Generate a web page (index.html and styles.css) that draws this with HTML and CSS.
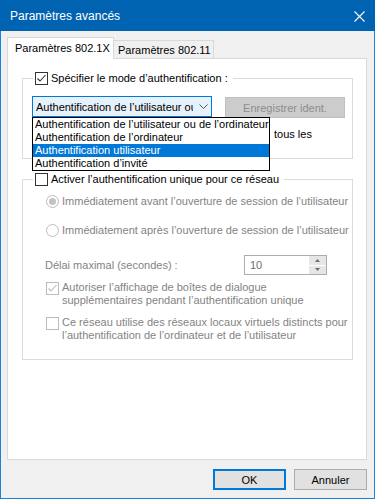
FILE: index.html
```html
<!DOCTYPE html>
<html lang="fr">
<head>
    <meta charset="UTF-8">
    <meta name="viewport" content="width=device-width, initial-scale=1.0">
    <title>Paramètres avancés</title>
    <link rel="stylesheet" href="styles.css">
</head>
<body>

    <div class="window">
        <div class="titlebar">
            <span>Paramètres avancés</span>
            <svg class="close" width="11" height="11" viewBox="0 0 11 11"><path d="M0.5 0.5L10.5 10.5M10.5 0.5L0.5 10.5" stroke="#fff" stroke-width="1.1" fill="none"/></svg>
        </div>

        <div class="client">
            <div class="tabs">
                <div class="tab active">Paramètres 802.1X</div>
                <div class="tab">Paramètres 802.11</div>
            </div>

            <div class="panel">
                <fieldset class="group group-auth">
                    <legend>
                        <span class="cb"><svg width="11" height="11" viewBox="0 0 11 11"><path d="M1.5 5.5L4 8L9.5 2" stroke="#333" stroke-width="1.1" fill="none"/></svg></span>
                        Spécifier le mode d’authentification :
                    </legend>

                    <div class="auth-row">
                        <div class="combo-wrap">
                            <div class="combo">
                                <span class="combo-text">Authentification de l’utilisateur ou</span>
                                <svg class="chevron" width="9" height="5" viewBox="0 0 9 5"><path d="M0.5 0.5L4.5 4.5L8.5 0.5" stroke="#555" stroke-width="1" fill="none"/></svg>
                            </div>
                            <ul class="dropdown">
                                <li>Authentification de l’utilisateur ou de l’ordinateur</li>
                                <li>Authentification de l’ordinateur</li>
                                <li class="selected">Authentification utilisateur</li>
                                <li>Authentification d’invité</li>
                            </ul>
                        </div>
                        <button class="btn-register" disabled>Enregistrer ident.</button>
                    </div>

                    <div class="cred-row"><span class="cred-text">tous les</span></div>
                </fieldset>

                <fieldset class="group group-sso">
                    <legend>
                        <span class="cb"></span>
                        Activer l’authentification unique pour ce réseau
                    </legend>

                    <div class="opt-row radio-first">
                        <span class="radio checked"></span>
                        <span>Immédiatement avant l’ouverture de session de l’utilisateur</span>
                    </div>
                    <div class="opt-row radio-second">
                        <span class="radio"></span>
                        <span>Immédiatement après l’ouverture de session de l’utilisateur</span>
                    </div>

                    <div class="delay-row">
                        <span>Délai maximal (secondes) :</span>
                        <div class="spin">
                            <span class="spin-value">10</span>
                            <span class="spin-btns">
                                <span><svg width="5" height="3" viewBox="0 0 5 3"><path d="M0 3L2.5 0L5 3Z" fill="#6d6d6d"/></svg></span>
                                <span><svg width="5" height="3" viewBox="0 0 5 3"><path d="M0 0L2.5 3L5 0Z" fill="#6d6d6d"/></svg></span>
                            </span>
                        </div>
                    </div>

                    <div class="opt-row check-first">
                        <span class="cb disabled"><svg width="11" height="11" viewBox="0 0 11 11"><path d="M1.5 5.5L4 8L9.5 2" stroke="#bcbcbc" stroke-width="1.1" fill="none"/></svg></span>
                        <span>Autoriser l’affichage de boîtes de dialogue<br>supplémentaires pendant l’authentification unique</span>
                    </div>
                    <div class="opt-row check-second">
                        <span class="cb disabled"></span>
                        <span>Ce réseau utilise des réseaux locaux virtuels distincts pour<br>l’authentification de l’ordinateur et de l’utilisateur</span>
                    </div>
                </fieldset>
            </div>

            <div class="buttons">
                <button class="btn btn-default">OK</button>
                <button class="btn">Annuler</button>
            </div>
        </div>
    </div>

</body>
</html>
```

FILE: styles.css
```css
* { box-sizing: border-box; }
body { margin: 0; font-family: "Liberation Sans", Arial, sans-serif; font-size: 11px; color: #000; background: #f0f0f0; }

.window { width: 375px; height: 499px; border: 1px solid #1883d7; border-top: none; background: #f0f0f0; }
.titlebar { height: 31px; margin: 0 -1px; padding: 0 10px; background: #0063b1; color: #fff; font-size: 12px; display: flex; align-items: center; justify-content: space-between; }
.close { margin-top: 1px; }

.client { padding: 6px 7px 0 6px; }
.tabs { display: flex; align-items: flex-end; }
.tab { width: 100px; height: 18px; padding-left: 4px; border: 1px solid #d9d9d9; border-left: none; border-bottom: none; background: #f0f0f0; line-height: 18px; white-space: nowrap; }
.tab.active { width: 107px; height: 22px; padding-left: 7px; margin-bottom: -1px; border-left: 1px solid #d9d9d9; background: #fff; line-height: 20px; position: relative; z-index: 1; }

.panel { height: 402px; padding: 0 13px 0 14px; border: 1px solid #d9d9d9; background: #fff; }

.group { margin: 13px 0 0; padding: 0 0 4px; min-width: 0; border: 1px solid #dcdcdc; }
.group-sso { margin-top: 14px; padding-bottom: 17px; color: #838383; }
.group legend { margin-left: 10px; padding: 0 5px 0 2px; height: 13px; line-height: 13px; display: flex; align-items: center; gap: 3px; color: #000; }

.cb { width: 13px; height: 13px; flex: none; border: 1px solid #333; background: #fff; display: flex; align-items: center; justify-content: center; }
.cb.disabled { border-color: #bcbcbc; }
.radio { width: 13px; height: 13px; flex: none; border: 1px solid #bcbcbc; border-radius: 50%; background: #fff; display: flex; align-items: center; justify-content: center; }
.radio.checked::after { content: ""; width: 7px; height: 7px; border-radius: 50%; background: #c2c2c2; }

.auth-row { display: flex; align-items: flex-start; gap: 13px; margin: 11px 0 0 9px; }
.combo-wrap { position: relative; }
.combo { width: 180px; height: 21px; padding-left: 3px; border: 1px solid #0078d7; background: #e5f1fb; display: flex; align-items: center; }
.combo-text { width: 157px; overflow: hidden; white-space: nowrap; }
.chevron { margin-left: 6px; }
.dropdown { position: absolute; top: 21px; left: 0; z-index: 2; width: 238px; margin: 0; padding: 0; list-style: none; border: 1px solid #000; background: #fff; }
.dropdown li { height: 13px; padding-left: 2px; line-height: 13px; white-space: nowrap; }
.dropdown li.selected { background: #0078d7; color: #fff; }
.btn-register { width: 120px; height: 21px; margin-top: 1px; padding: 0; border: 1px solid #bfbfbf; background: #ccc; color: #8d8d8d; font: inherit; }

.cred-row { height: 26px; margin-top: 10px; padding-left: 251px; line-height: 13px; }

.opt-row { display: flex; align-items: flex-start; gap: 3px; margin-left: 23px; line-height: 13px; }
.radio-first { margin-top: 9px; }
.radio-second { margin-top: 16px; }
.delay-row { height: 20px; margin-top: 18px; padding: 0 25px 0 22px; display: flex; align-items: center; justify-content: space-between; }
.spin { width: 83px; height: 20px; border: 1px solid #acacac; background: #fff; display: flex; }
.spin-value { flex: 1; padding-left: 5px; line-height: 18px; color: #6d6d6d; }
.spin-btns { width: 17px; display: flex; flex-direction: column; gap: 1px; background: #fff; }
.spin-btns span { flex: 1; background: #e6e6e6; display: flex; align-items: center; justify-content: center; }
.check-first { margin-top: 6px; }
.check-second { margin-top: 9px; }
.check-first .cb, .check-second .cb { margin-top: 1px; }

.buttons { display: flex; justify-content: flex-end; gap: 8px; padding-top: 9px; }
.btn { width: 73px; height: 21px; padding: 0; border: 1px solid #adadad; background: #e1e1e1; font: inherit; color: #000; }
.btn-default { border: 2px solid #0078d7; }
```
